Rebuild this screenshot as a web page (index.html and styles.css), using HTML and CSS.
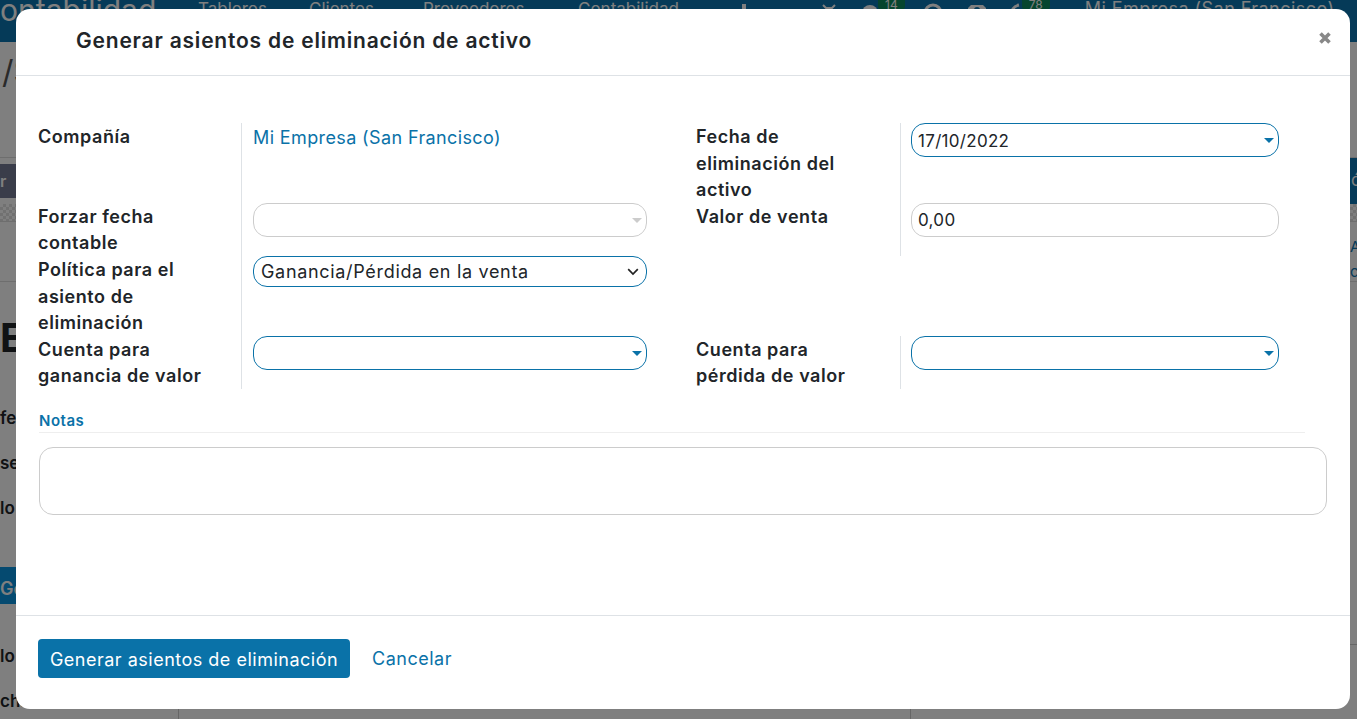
FILE: index.html
```html
<!DOCTYPE html>
<html lang="es">
<head>
  <meta charset="UTF-8">
  <title>Generar asientos de eliminación de activo</title>
  <link rel="stylesheet" href="styles.css">
</head>
<body>
  <!-- page behind the dialog -->
  <div class="page">
    <div class="topbar">
      <span class="brand">ontabilidad</span>
      <a class="menu-tableros">Tableros</a>
      <a class="menu-clientes">Clientes</a>
      <a class="menu-proveedores">Proveedores</a>
      <a class="menu-contabilidad">Contabilidad</a>
      <svg class="icon-plus" width="16" height="16" viewBox="0 0 16 16"><path d="M8 1v14M1 8h14" stroke="#fff" stroke-width="4"/></svg>
      <svg class="icon-bug" width="16" height="18" viewBox="0 0 16 18"><path d="M2 2l3 3h6l3-3M5 5l3 3 3-3M4 8h8v8H4z" fill="none" stroke="#fff" stroke-width="2"/></svg>
      <svg class="icon-chat" width="18" height="18" viewBox="0 0 18 18"><circle cx="9" cy="10" r="8" fill="#fff"/></svg>
      <span class="count count-chat">14</span>
      <svg class="icon-help" width="20" height="20" viewBox="0 0 20 20"><circle cx="10" cy="10" r="8" fill="none" stroke="#fff" stroke-width="3"/><circle cx="10" cy="9" r="2" fill="#fff"/></svg>
      <svg class="icon-user" width="18" height="20" viewBox="0 0 18 20"><path d="M3 2h12l3 3v15H0V5z" fill="#fff"/><circle cx="9" cy="7" r="3" fill="#0a74b0"/></svg>
      <svg class="icon-phone" width="12" height="20" viewBox="0 0 12 20"><path d="M10 2C5 3 2 7 2 14" fill="none" stroke="#fff" stroke-width="3"/></svg>
      <span class="count count-phone">78</span>
      <span class="company">Mi Empresa (San Francisco)</span>
    </div>

    <div class="crumb"><span>/S</span></div>

    <div class="toolbar">
      <span class="toolbar-left">r</span>
      <span class="toolbar-right">ó</span>
    </div>
    <div class="hatch"></div>
    <div class="chatter-row">
      <span class="chatter-link">A<br>c</span>
    </div>

    <div class="sheet">
      <div class="sheet-title">E</div>
      <div class="sheet-field first">fe</div>
      <div class="sheet-field">se</div>
      <div class="sheet-field">lo</div>
      <div class="sheet-tab">Ge</div>
      <div class="sheet-field after-tab">lo<span class="sheet-rule"></span></div>
      <div class="sheet-last">
        <span class="sheet-last-label">cha de inicio del</span>
        <span class="sheet-last-value">16/10/2022</span>
        <span class="sheet-last-label2">Fecha de</span>
      </div>
    </div>
  </div>

  <div class="backdrop"></div>

  <div class="modal">
    <div class="modal-header">
      <h4>Generar asientos de eliminación de activo</h4>
      <svg class="close" width="14" height="14" viewBox="0 0 14 14"><path d="M2.5 2.5l9 9M11.5 2.5l-9 9" stroke="#888" stroke-width="3.6"/></svg>
    </div>

    <div class="modal-body">
      <div class="form-grid">
        <label>Compañía</label>
        <div class="cell"><a class="link">Mi Empresa (San Francisco)</a></div>
        <label>Fecha de eliminación del activo</label>
        <div class="cell cell-right">
          <div class="combo required"><input type="text" value="17/10/2022"><span class="caret"></span></div>
        </div>

        <label>Forzar fecha contable</label>
        <div class="cell">
          <div class="combo"><input type="text"><span class="caret caret-off"></span></div>
        </div>
        <label>Valor de venta</label>
        <div class="cell cell-right">
          <div class="combo"><input type="text" value="0,00"></div>
        </div>

        <label>Política para el asiento de eliminación</label>
        <div class="cell">
          <div class="combo combo-select required">
            <select><option>Ganancia/Pérdida en la venta</option></select>
            <svg class="chevron" width="12" height="8" viewBox="0 0 12 8"><path d="M1.2 1.2L6 6l4.8-4.8" fill="none" stroke="#222" stroke-width="1.7"/></svg>
          </div>
        </div>
        <div class="blank"></div>
        <div class="blank"></div>

        <label>Cuenta para ganancia de valor</label>
        <div class="cell">
          <div class="combo required"><input type="text"><span class="caret"></span></div>
        </div>
        <label>Cuenta para pérdida de valor</label>
        <div class="cell cell-right">
          <div class="combo required"><input type="text"><span class="caret"></span></div>
        </div>
      </div>

      <div class="separator">Notas</div>
      <textarea class="notes"></textarea>
    </div>

    <div class="modal-footer">
      <button class="btn-primary">Generar asientos de eliminación</button>
      <a class="btn-link">Cancelar</a>
    </div>
  </div>
</body>
</html>
```

FILE: styles.css
```css
html, body {
  margin: 0;
  height: 719px;
  overflow: hidden;
}

body {
  font-family: "Inter", "Open Sans", sans-serif;
  font-size: 17px;
  color: #212529;
  background: #fff;
  position: relative;
}

/* Page behind */
.page {
  display: flex;
  flex-direction: column;
  height: 719px;
}

.topbar {
  height: 42px;
  background: #0a74b0;
  color: #fff;
  display: flex;
  align-items: flex-start;
  flex: none;
  line-height: 24px;
  overflow: hidden;
}

.brand { font-size: 30px; width: 198px; margin: -3px 0 0 -2px; padding-left: 2px; flex: none; white-space: nowrap; line-height: 26px; }
.topbar a { flex: none; font-size: 17px; margin-top: -3px; }
.menu-tableros { width: 111px; }
.menu-clientes { width: 114px; }
.menu-proveedores { width: 155px; }
.menu-contabilidad { width: 158px; }
.topbar svg { flex: none; margin-top: 3px; }
.icon-plus { margin-right: 69px; }
.icon-bug { margin-right: 24px; }
.count {
  flex: none;
  background: #0d8a5c;
  font-size: 12px;
  height: 10px;
  line-height: 10px;
  padding: 0 7px;
  border-radius: 0 0 4px 4px;
}
.count-chat { margin-right: 18px; margin-left: -1px; }
.icon-help { margin-right: 25px; }
.icon-user { margin-right: 23px; }
.count-phone { margin-right: 35px; margin-left: 1px; }
.company { flex: none; font-size: 18px; letter-spacing: .45px; margin-top: -3px; }

.crumb {
  height: 116px;
  flex: none;
  border-bottom: 1px solid #ddd;
  box-sizing: border-box;
  font-size: 32px;
  padding-top: 10px;
  padding-left: 2px;
  color: #555;
}

.toolbar {
  height: 46px;
  flex: none;
  display: flex;
  justify-content: space-between;
  align-items: stretch;
}
.toolbar-left {
  margin-top: 6px;
  margin-bottom: 6px;
  width: 16px;
  background: #747a94;
  color: #fff;
  font-weight: 600;
  font-size: 16px;
  line-height: 34px;
  text-align: left;
}
.toolbar-right {
  width: 20px;
  box-sizing: border-box;
  background: #0a74b0;
  color: #fff;
  line-height: 44px;
  padding-left: 14px;
}

.hatch {
  height: 17px;
  flex: none;
  background: repeating-conic-gradient(#e2e2e2 0 25%, #fff 0 50%) 0 0 / 6px 6px;
  border-bottom: 1px solid #ddd;
}

.chatter-row {
  height: 59px;
  flex: none;
  border-bottom: 1px solid #ddd;
  display: flex;
  justify-content: flex-end;
}
.chatter-link {
  width: 7px;
  font-size: 15px;
  line-height: 25px;
  padding-top: 12px;
  color: #0a74b0;
  white-space: nowrap;
  overflow: hidden;
}

.sheet {
  flex: 1;
  display: flex;
  flex-direction: column;
  font-weight: 600;
  overflow: hidden;
}
.sheet-title {
  font-size: 40px;
  font-weight: 700;
  line-height: 40px;
  margin-top: 36px;
}
.sheet-field { line-height: 24px; margin-top: 21px; }
.sheet-field.first { margin-top: 48px; }
.sheet-tab {
  margin-top: 47px;
  height: 43px;
  line-height: 43px;
  background: #0a94e0;
  color: #fff;
  width: 16px;
  overflow: hidden;
  white-space: nowrap;
  font-size: 18px;
}
.sheet-field.after-tab {
  margin-top: 40px;
  display: flex;
  justify-content: space-between;
  align-items: flex-start;
}
.sheet-rule { width: 7px; border-top: 1px solid #ccc; }
.sheet-last {
  display: flex;
  margin-top: 21px;
  line-height: 24px;
  white-space: nowrap;
}
.sheet-last-label { width: 179px; box-sizing: border-box; border-right: 1px solid #ccc; flex: none; height: 30px; }
.sheet-last-value { width: 527px; padding-left: 11px; box-sizing: border-box; font-weight: 400; flex: none; }
.sheet-last-label2 { width: 205px; box-sizing: border-box; border-right: 1px solid #ccc; height: 30px; flex: none; }

/* Dialog */
.backdrop {
  position: absolute;
  inset: 0;
  background: rgba(0, 0, 0, 0.5);
}

.modal {
  position: absolute;
  left: 16px;
  top: 9px;
  width: 1334px;
  height: 700px;
  background: #fff;
  border-radius: 14px;
  display: flex;
  flex-direction: column;
  overflow: hidden;
}

.modal-header {
  height: 62px;
  flex: none;
  border-bottom: 1px solid #dee2e6;
  display: flex;
  align-items: center;
  justify-content: space-between;
  padding: 0 18px 4px 60px;
}

.modal-header h4 {
  margin: 0;
  font-size: 21px;
  letter-spacing: .8px;
  font-weight: 600;
  color: #212529;
}

.close { margin-bottom: 4px; }

.modal-body {
  flex: 1;
  padding: 47px 22px 0 22px;
}

.form-grid {
  display: grid;
  grid-template-columns: 203px 455px 204px 1fr;
  font-size: 18px;
  letter-spacing: .38px;
  line-height: 26.6px;
}

.form-grid label {
  font-weight: 600;
  color: #212529;
  letter-spacing: .55px;
  padding: 1px 22px 0 0;
  margin-bottom: -1px;
}

.cell {
  border-left: 1px solid #dee2e6;
  padding-left: 11px;
}

.cell-right { padding-left: 10px; }

.link { color: #0a72a8; line-height: 30px; }

.combo {
  position: relative;
  width: 394px;
}
.cell-right .combo { width: 368px; }

.combo input,
.combo select {
  display: block;
  width: 100%;
  height: 34px;
  box-sizing: border-box;
  border: 1px solid #ccc;
  border-radius: 14px;
  padding: 1px 6px 0;
  font: inherit;
  font-size: 17px;
  letter-spacing: .3px;
  color: #212529;
  background: #fff;
  outline: none;
}
.combo select {
  height: 31px;
  appearance: none;
  padding: 1px 7px 0;
  font-size: 18px;
  letter-spacing: .68px;
}
.required input,
.required select { border-color: #0a72a8; }

.caret {
  position: absolute;
  right: 5px;
  top: 15px;
  border-left: 5px solid transparent;
  border-right: 5px solid transparent;
  border-top: 5px solid #0a72a8;
}
.caret-off { border-top-color: #ccc; }

.chevron {
  position: absolute;
  right: 8px;
  top: 12px;
}

.separator {
  margin-top: 22px;
  width: 1266px;
  margin-left: 1px;
  font-size: 15px;
  letter-spacing: .5px;
  font-weight: 600;
  line-height: 20px;
  color: #0a72a8;
  border-bottom: 1px solid #eee;
  padding-bottom: 1px;
}

.notes {
  display: block;
  margin: 14px 0 0 1px;
  width: 1288px;
  height: 68px;
  box-sizing: border-box;
  border: 1px solid #ccc;
  border-radius: 14px;
  resize: none;
  outline: none;
}

.modal-footer {
  height: 94px;
  flex: none;
  border-top: 1px solid #dee2e6;
  padding: 23px 22px 0;
  box-sizing: border-box;
  display: flex;
  align-items: flex-start;
  gap: 22px;
  font-size: 18px;
  letter-spacing: .5px;
}

.btn-primary {
  height: 39px;
  width: 312px;
  background: #0a72a8;
  color: #fff;
  border: none;
  border-radius: 4px;
  font: inherit;
  letter-spacing: inherit;
  padding: 1px 0 0;
}

.btn-link {
  color: #0a72a8;
  line-height: 40px;
}
```
